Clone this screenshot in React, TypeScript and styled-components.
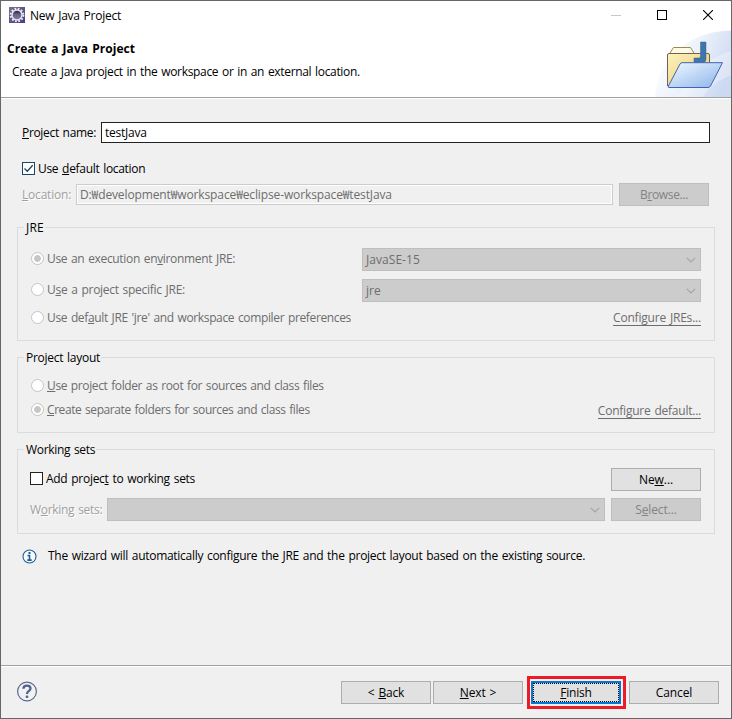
import React from "react";
import styled, { createGlobalStyle, css } from "styled-components";

const GlobalStyle = createGlobalStyle`
  * { box-sizing: border-box; }
  body { margin: 0; background: #f0f0f0; }
`;

const Dialog = styled.div`
  display: flex;
  flex-direction: column;
  width: 732px;
  height: 719px;
  border: 1px solid #66676b;
  background: #f0f0f0;
  color: #000;
  font: 12px/18px "Open Sans", "Noto Sans CJK KR", sans-serif;
  word-spacing: 1px;
  white-space: nowrap;
  overflow: hidden;
`;

const TitleBar = styled.div`
  display: flex;
  align-items: flex-start;
  height: 29px;
  padding: 6px 0 0 8px;
  background: #fff;
`;

const WindowTitle = styled.div`
  flex: 1;
  padding-left: 5px;
`;

const WindowButton = styled.div`
  display: flex;
  justify-content: center;
  width: 46px;
  padding-top: 3px;
`;

const Header = styled.div`
  display: flex;
  justify-content: space-between;
  height: 69px;
  background: #fff;
  border-bottom: 1px solid #fff;
  box-shadow: inset 0 -1px 0 #a0a0a0;
`;

const HeaderText = styled.div`
  display: flex;
  flex-direction: column;
  gap: 5px;
  padding: 10px 0 0 6px;
`;

const Heading = styled.div`
  font-weight: 700;
`;

const Description = styled.div`
  padding-left: 5px;
`;

const Banner = styled.svg`
  display: block;
  width: 76px;
  height: 67px;
`;

const Body = styled.div`
  flex: 1;
  display: flex;
  flex-direction: column;
  padding: 23px 16px 0;
`;

const FormRow = styled.div<{ $height: number; $top?: number; $right?: number }>`
  display: flex;
  align-items: center;
  height: ${(p) => p.$height}px;
  margin: ${(p) => p.$top ?? 0}px ${(p) => p.$right ?? 5}px 0 5px;
`;

const Label = styled.span<{ $spacing?: number; $tone?: "dim" | "etched" }>`
  display: inline-block;
  letter-spacing: ${(p) => p.$spacing ?? 0}px;
  ${(p) => p.$tone === "dim" && css`color: #6d6d6d;`}
  ${(p) => p.$tone === "etched" && css`color: #a0a0a0; text-shadow: 1px 1px 0 #fff;`}
`;

const Mnemonic = styled.span`
  text-decoration: underline;
  text-decoration-thickness: 1px;
  text-underline-offset: 1px;
  text-decoration-skip-ink: none;
`;

const LabelCell = styled.div<{ $width: number }>`
  width: ${(p) => p.$width}px;
`;

const TextField = styled.div<{ $disabled?: boolean }>`
  flex: 1;
  display: flex;
  align-items: center;
  height: 21px;
  padding-left: 3px;
  background: #fff;
  border: 1px solid #222;
  ${(p) =>
    p.$disabled &&
    css`
      background: #f0f0f0;
      color: #6d6d6d;
      border-color: #ccc;
      box-shadow: inset 0 0 0 1px #fff;
    `}
`;

const Button = styled.div<{ $disabled?: boolean; $left?: number }>`
  position: relative;
  display: flex;
  align-items: center;
  justify-content: center;
  width: 90px;
  height: 23px;
  margin-left: ${(p) => p.$left ?? 0}px;
  background: ${(p) => (p.$disabled ? "#ccc" : "#e1e1e1")};
  border: 1px solid ${(p) => (p.$disabled ? "#bfbfbf" : "#adadad")};
  color: ${(p) => (p.$disabled ? "#838383" : "#000")};
`;

const DefaultButton = styled(Button)`
  border: 2px solid #0078d7;
  &::before {
    content: "";
    position: absolute;
    inset: 0;
    border: 1px dotted #000;
  }
  &::after {
    content: "";
    position: absolute;
    inset: -7px -7px -7px -6px;
    border: 3px solid #ed1c24;
  }
`;

const Group = styled.div<{ $height: number; $top: number }>`
  display: flex;
  flex-direction: column;
  height: ${(p) => p.$height}px;
  margin-top: ${(p) => p.$top}px;
  border: 1px solid #dcdcdc;
`;

const GroupTitle = styled.div`
  align-self: flex-start;
  height: 18px;
  margin: -9px 0 0 6px;
  padding: 0 1px 0 2px;
  background: #f0f0f0;
`;

const GroupRow = styled.div<{ $top: number; $height?: number }>`
  display: flex;
  align-items: center;
  height: ${(p) => p.$height ?? 23}px;
  margin: ${(p) => p.$top}px 13px 0 12px;
`;

const OptionCell = styled.div<{ $width?: number; $lift?: boolean }>`
  display: flex;
  align-items: center;
  gap: 3px;
  padding-bottom: ${(p) => (p.$lift ? 2 : 0)}px;
  ${(p) => (p.$width ? css`width: ${p.$width}px;` : css`flex: 1;`)}
`;

const RadioMark = styled.span<{ $on?: boolean }>`
  width: 13px;
  height: 13px;
  margin-left: 1px;
  border: 1px solid #c4c4c4;
  border-radius: 50%;
  background: ${(p) => (p.$on ? "radial-gradient(circle, #c6c6c6 0 3px, #fff 3.8px)" : "#fff")};
`;

const CheckMark = styled.span<{ $on?: boolean }>`
  display: flex;
  width: 13px;
  height: 13px;
  background: #fff;
  border: 1px solid ${(p) => (p.$on ? "#1c4468" : "#222")};
`;

const Combo = styled.div`
  flex: 1;
  display: flex;
  align-items: center;
  justify-content: space-between;
  height: 23px;
  padding: 0 4px 0 3px;
  background: #ccc;
  border: 1px solid #bfbfbf;
  color: #6d6d6d;
`;

const Link = styled.span<{ $spacing: number; $drop?: number }>`
  display: inline-block;
  height: 16px;
  line-height: 16px;
  color: #6d6d6d;
  border-bottom: 1px solid #6d6d6d;
  letter-spacing: ${(p) => p.$spacing}px;
  margin-top: ${(p) => p.$drop ?? 0}px;
`;

const InfoRow = styled.div`
  display: flex;
  align-items: center;
  gap: 11px;
  height: 18px;
  margin: 13px 0 0 5px;
`;

const Footer = styled.div`
  display: flex;
  align-items: flex-start;
  height: 53px;
  padding: 15px 12px 0 15px;
  border-top: 1px solid #a0a0a0;
  box-shadow: inset 0 1px 0 #fff;
`;

const Spacer = styled.div`
  flex: 1;
`;

const Chevron = () => (
  <svg width="10" height="6" viewBox="0 0 10 6">
    <path d="M0.8 0.8L5 5L9.2 0.8" fill="none" stroke="#a3a3a3" strokeWidth="1.1" />
  </svg>
);

const EclipseIcon = () => (
  <svg width="16" height="16" viewBox="0 0 16 16">
    <defs>
      <linearGradient id="gearBg" x1="0" y1="0" x2="1" y2="1">
        <stop offset="0" stopColor="#77728f" />
        <stop offset="1" stopColor="#4a3a83" />
      </linearGradient>
      <linearGradient id="gearCore" x1="0" y1="0" x2="0" y2="1">
        <stop offset="0" stopColor="#2a2647" />
        <stop offset="1" stopColor="#8d89aa" />
      </linearGradient>
    </defs>
    <rect width="16" height="16" fill="url(#gearBg)" />
    <circle cx="8" cy="8" r="6.3" fill="none" stroke="#eeeef2" strokeWidth="2" strokeDasharray="1.7 1.6" />
    <circle cx="8" cy="8" r="5" fill="url(#gearCore)" stroke="#e4e3ea" strokeWidth="1.5" />
    <path d="M4 7.300h8M4 9h8" stroke="#8b87a8" strokeWidth="0.5" />
  </svg>
);

const JavaFolderBanner = () => (
  <Banner viewBox="0 0 76 67">
    <defs>
      <linearGradient id="glow" x1="0" y1="0.2" x2="1" y2="0.6">
        <stop offset="0.1" stopColor="#fcfdff" />
        <stop offset="0.5" stopColor="#edf2fb" />
        <stop offset="1" stopColor="#ccd9f2" />
      </linearGradient>
      <linearGradient id="folderBack" x1="0" y1="0" x2="1" y2="1">
        <stop offset="0" stopColor="#fcf3c0" />
        <stop offset="1" stopColor="#e8c768" />
      </linearGradient>
      <linearGradient id="folderFront" x1="0" y1="0" x2="1" y2="1">
        <stop offset="0.1" stopColor="#e8f3fe" />
        <stop offset="1" stopColor="#8ab3ea" />
      </linearGradient>
    </defs>
    <path d="M0 67C2 31 32 1 76 0.5V67Z" fill="url(#glow)" />
    <path d="M22 67C36 46 54 27 76 21V46C64 49 54 57 48 67Z" fill="#fff" opacity="0.3" />
    <path d="M15 23L18.500 17.500H35.500L39 23" fill="#fffbe2" stroke="#9b8852" />
    <path d="M12.500 56V25Q12.500 23.500 14 23.500H53Q54.500 23.500 54.500 25V50" fill="url(#folderBack)" stroke="#765f55" />
    <path d="M45.500 12H51V29Q51 32.500 47.500 32.500H39V28H44Q45.500 28 45.500 26Z" fill="#3f76aa" stroke="#30679b" strokeWidth="0.5" />
    <path d="M27 32.700H67.500L55.500 56Q54.800 57.500 53 57.500H13.800Q12.800 57.500 13.400 56L25 34Q25.700 32.700 27 32.700Z" fill="url(#folderFront)" stroke="#4462b0" />
  </Banner>
);

const InfoIcon = () => (
  <svg width="15" height="15" viewBox="0 0 15 15">
    <circle cx="7.500" cy="7.500" r="6.500" fill="#f8fbfd" stroke="#1f5f96" strokeWidth="1.100" />
    <rect x="6.500" y="3" width="2" height="2" fill="#1f5f96" />
    <path d="M5.500 6.500H7.500V11M5.300 11.100H9.700" fill="none" stroke="#1f5f96" strokeWidth="1.600" />
  </svg>
);

const HelpIcon = () => (
  <svg width="22" height="22" viewBox="0 0 22 22">
    <circle cx="11" cy="10.500" r="9.400" fill="#f1f2f4" stroke="#5a6b8d" strokeWidth="1.200" />
    <path d="M7.400 7.800C7.500 5.300 9 4.700 11 4.700C13.200 4.700 14.500 5.800 14.500 7.500C14.500 10 11 9.900 11 13" fill="none" stroke="#50638c" strokeWidth="2.300" />
    <rect x="9.700" y="14.600" width="2.600" height="2.400" rx="0.800" fill="#50638c" />
  </svg>
);

export default function App() {
  return (
    <>
      <GlobalStyle />
      <Dialog>
        <TitleBar>
          <EclipseIcon />
          <WindowTitle><Label $spacing={-0.25}>New Java Project</Label></WindowTitle>
          <WindowButton>
            <svg width="10" height="10"><path d="M0 5.500H10" stroke="#c8c8c8" /></svg>
          </WindowButton>
          <WindowButton>
            <svg width="10" height="10"><rect x="0.500" y="0.500" width="9" height="9" fill="none" stroke="#000" /></svg>
          </WindowButton>
          <WindowButton>
            <svg width="10" height="10"><path d="M0 0L10 10M10 0L0 10" stroke="#000" strokeWidth="1.100" /></svg>
          </WindowButton>
        </TitleBar>
        <Header>
          <HeaderText>
            <Heading><Label $spacing={0.04}>Create a Java Project</Label></Heading>
            <Description>
              <Label $spacing={-0.33}>Create a Java project in the workspace or in an external location.</Label>
            </Description>
          </HeaderText>
          <JavaFolderBanner />
        </Header>
        <Body>
          <FormRow $height={21}>
            <LabelCell $width={79}><Label $spacing={-0.33}><Mnemonic>P</Mnemonic>roject name:</Label></LabelCell>
            <TextField><Label $spacing={-0.25}>testJava</Label></TextField>
          </FormRow>
          <FormRow $height={13} $top={19}>
            <LabelCell $width={16}><CheckMark $on>
              <svg width="11" height="11" viewBox="0 0 11 11">
                <path d="M1.500 5.500L4.300 8.300L9.700 2.300" fill="none" stroke="#1c4468" strokeWidth="1.300" />
              </svg>
            </CheckMark></LabelCell>
            <Label $spacing={-0.31}>Use <Mnemonic>d</Mnemonic>efault location</Label>
          </FormRow>
          <FormRow $height={23} $top={8} $right={6}>
            <LabelCell $width={54}><Label $tone="etched" $spacing={-0.2}><Mnemonic>L</Mnemonic>ocation:</Label></LabelCell>
            <TextField $disabled>
              <Label $spacing={-0.12}>D:₩development₩workspace₩eclipse-workspace₩testJava</Label>
            </TextField>
            <Button $disabled $left={6}><Label $spacing={-0.34}>B<Mnemonic>r</Mnemonic>owse...</Label></Button>
          </FormRow>

          <Group $height={114} $top={21}>
            <GroupTitle><Label $spacing={0.2}>JRE</Label></GroupTitle>
            <GroupRow $top={11}>
              <OptionCell $width={332} $lift>
                <RadioMark $on />
                <Label $tone="dim" $spacing={-0.33}>Use an execution en<Mnemonic>v</Mnemonic>ironment JRE:</Label>
              </OptionCell>
              <Combo><Label $spacing={0.05}>JavaSE-15</Label><Chevron /></Combo>
            </GroupRow>
            <GroupRow $top={8}>
              <OptionCell $width={332} $lift>
                <RadioMark />
                <Label $tone="dim" $spacing={-0.28}>U<Mnemonic>s</Mnemonic>e a project specific JRE:</Label>
              </OptionCell>
              <Combo><Label>jre</Label><Chevron /></Combo>
            </GroupRow>
            <GroupRow $top={6} $height={19}>
              <OptionCell>
                <RadioMark />
                <Label $tone="dim" $spacing={-0.36}>Use def<Mnemonic>a</Mnemonic>ult JRE 'jre' and workspace compiler preferences</Label>
              </OptionCell>
              <Link $spacing={-0.2}>Configure JREs...</Link>
            </GroupRow>
          </Group>

          <Group $height={76} $top={16}>
            <GroupTitle><Label $spacing={-0.27}>Project layout</Label></GroupTitle>
            <GroupRow $top={9} $height={19}>
              <OptionCell>
                <RadioMark />
                <Label $tone="dim" $spacing={-0.38}><Mnemonic>U</Mnemonic>se project folder as root for sources and class files</Label>
              </OptionCell>
            </GroupRow>
            <GroupRow $top={5} $height={19}>
              <OptionCell>
                <RadioMark $on />
                <Label $tone="dim" $spacing={-0.42}><Mnemonic>C</Mnemonic>reate separate folders for sources and class files</Label>
              </OptionCell>
              <Link $spacing={-0.23} $drop={2}>Configure default...</Link>
            </GroupRow>
          </Group>

          <Group $height={85} $top={16}>
            <GroupTitle><Label $spacing={-0.33}>Working sets</Label></GroupTitle>
            <GroupRow $top={9}>
              <OptionCell $lift>
                <CheckMark />
                <Label $spacing={-0.28}>Add projec<Mnemonic>t</Mnemonic> to working sets</Label>
              </OptionCell>
              <Button><Label $spacing={-0.08}>Ne<Mnemonic>w</Mnemonic>...</Label></Button>
            </GroupRow>
            <GroupRow $top={7}>
              <LabelCell $width={77}><Label $tone="etched" $spacing={-0.3}>W<Mnemonic>o</Mnemonic>rking sets:</Label></LabelCell>
              <Combo><span /><Chevron /></Combo>
              <Button $disabled $left={6}><Label $spacing={-0.12}>S<Mnemonic>e</Mnemonic>lect...</Label></Button>
            </GroupRow>
          </Group>

          <InfoRow>
            <InfoIcon />
            <Label $spacing={-0.285}>The wizard will automatically configure the JRE and the project layout based on the existing source.</Label>
          </InfoRow>
        </Body>
        <Footer>
          <HelpIcon />
          <Spacer />
          <Button><Label $spacing={-0.15}>&lt; <Mnemonic>B</Mnemonic>ack</Label></Button>
          <Button $left={2}><Label $spacing={-0.15}><Mnemonic>N</Mnemonic>ext &gt;</Label></Button>
          <DefaultButton $left={8}><Label $spacing={-0.2}><Mnemonic>F</Mnemonic>inish</Label></DefaultButton>
          <Button $left={8}><Label $spacing={-0.1}>Cancel</Label></Button>
        </Footer>
      </Dialog>
    </>
  );
}
